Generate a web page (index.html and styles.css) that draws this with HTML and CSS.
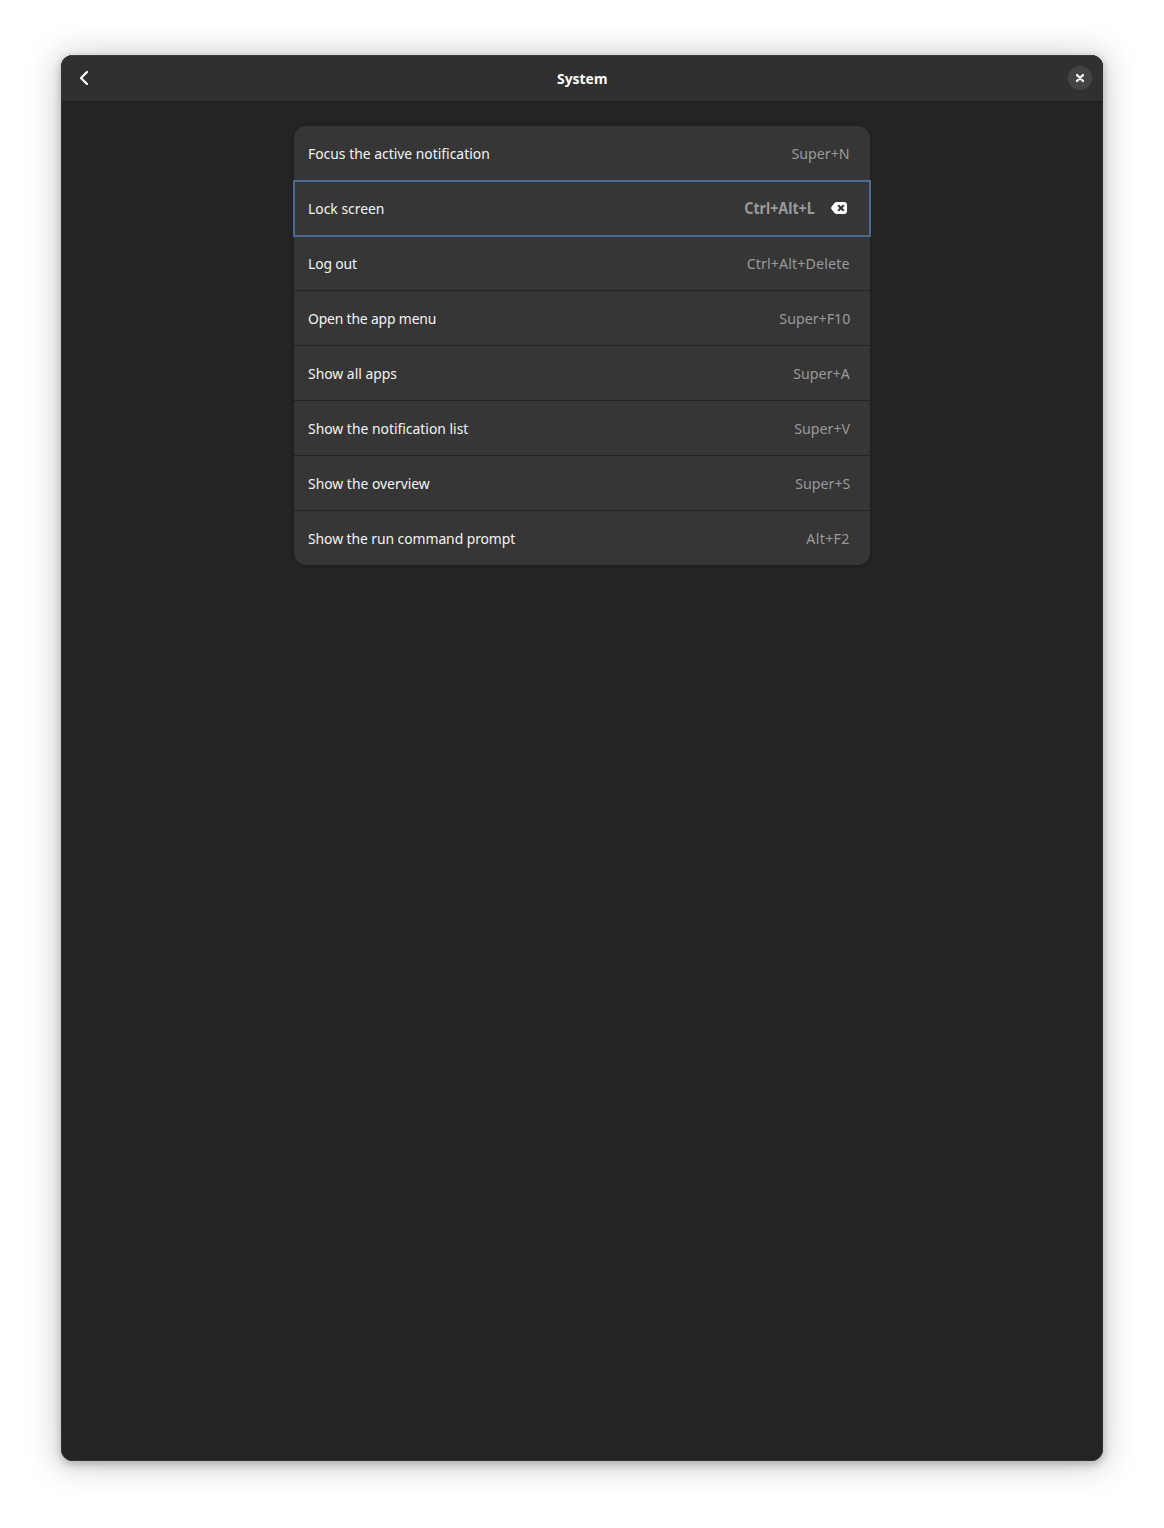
FILE: index.html
```html
<!DOCTYPE html>
<html lang="en">
<head>
<meta charset="utf-8">
<title>System</title>
<link rel="stylesheet" href="styles.css">
</head>
<body>
<main class="window">
  <header class="headerbar">
    <button class="back" aria-label="Back"><svg width="16" height="16" viewBox="0 0 16 16"><path d="M11 2 5 8l6 6" fill="none" stroke="#fff" stroke-width="2.200" stroke-linecap="round" stroke-linejoin="round"/></svg></button>
    <h1 class="title">System</h1>
    <button class="close" aria-label="Close"><svg width="16" height="16" viewBox="0 0 16 16"><path d="m5 5 6 6m0-6-6 6" fill="none" stroke="#fff" stroke-width="2.300" stroke-linecap="round"/></svg></button>
  </header>
  <ul class="list">
    <li class="row"><span class="name">Focus the active notification</span><span class="keys">Super+N</span></li>
    <li class="row focused"><span class="name">Lock screen</span><span class="keys custom">Ctrl+Alt+L</span><button class="reset" aria-label="Reset"><svg width="16" height="16" viewBox="0 0 16 16"><path d="M6 2h7a3 3 0 0 1 3 3v6a3 3 0 0 1-3 3H6c-1 0-1.800-.4-2.500-1L.6 9.300a2 2 0 0 1 0-2.600L3.500 3C4.200 2.400 5 2 6 2z" fill="#fff"/><path d="m8 6 4 4m0-4-4 4" fill="none" stroke="#363636" stroke-width="2.200" stroke-linecap="square"/></svg></button></li>
    <li class="row"><span class="name">Log out</span><span class="keys">Ctrl+Alt+Delete</span></li>
    <li class="row"><span class="name">Open the app menu</span><span class="keys">Super+F10</span></li>
    <li class="row"><span class="name">Show all apps</span><span class="keys">Super+A</span></li>
    <li class="row"><span class="name">Show the notification list</span><span class="keys">Super+V</span></li>
    <li class="row"><span class="name">Show the overview</span><span class="keys">Super+S</span></li>
    <li class="row"><span class="name">Show the run command prompt</span><span class="keys">Alt+F2</span></li>
  </ul>
</main>
</body>
</html>
```
FILE: styles.css
```css
* { box-sizing: border-box; }
body {
  margin: 0;
  height: 1528px;
  padding: 55px 61px 67px;
  background: #fff;
  font: 15.3px/22px "Noto Sans", sans-serif;
  color: #fff;
}
button { border: 0; padding: 0; background: none; display: grid; place-items: center; }
svg { display: block; }
.window {
  height: 1406px;
  border-radius: 12px;
  background: #242424;
  overflow: hidden;
  box-shadow: inset 0 0 0 1px #303030, 0 3px 9px 1px rgba(0,0,0,.22), 0 2px 32px 6px rgba(0,0,0,.16);
}
.headerbar {
  height: 46px;
  display: grid;
  grid-template-columns: 46px 1fr 46px;
  align-items: center;
  justify-items: center;
  background: #303030;
  box-shadow: inset 0 1px #3e3e3e, 0 1px #1f1f1f;
}
.title {
  margin: 0;
  font-size: 15px;
  line-height: 22px;
  font-weight: 700;
  font-stretch: 87.5%;
  transform: scaleX(.925);
}
.close { width: 24px; height: 24px; border-radius: 50%; background: #444; }
.list {
  list-style: none;
  width: 576px;
  margin: 25px auto 0;
  padding: 0;
  border-radius: 12px;
  background: #363636;
  box-shadow: 0 0 0 1px rgba(0,0,0,.06), 0 1px 3px 1px rgba(0,0,0,.14);
}
.row {
  height: 55px;
  display: flex;
  align-items: center;
  padding: 0 20px 0 14px;
  border-bottom: 1px solid #232323;
}
.row:last-child { height: 54px; border-bottom: 0; }
.row:first-child { border-bottom-color: #363636; }

/* Labels are set slightly narrow, anchored at their outer edge */
.name { flex: 1; color: #f4f4f4; transform: scaleX(.908); transform-origin: left; }
.keys { color: #9a9a9a; transform: scaleX(.93); transform-origin: right; }
.row:nth-child(3) .name { letter-spacing: -.15px; }
.row:nth-child(4) .name { letter-spacing: -.18px; }
.row:nth-child(8) .name { letter-spacing: -.07px; }
.row:nth-child(3) .keys { letter-spacing: .12px; }
.row:nth-child(8) .keys { letter-spacing: .35px; }

.focused { outline: 2px solid #4a6a90; outline-offset: -1px; border-bottom-color: transparent; padding-right: 23px; }
.custom { font-weight: 700; font-stretch: 87.5%; margin-right: 16px; }
```
